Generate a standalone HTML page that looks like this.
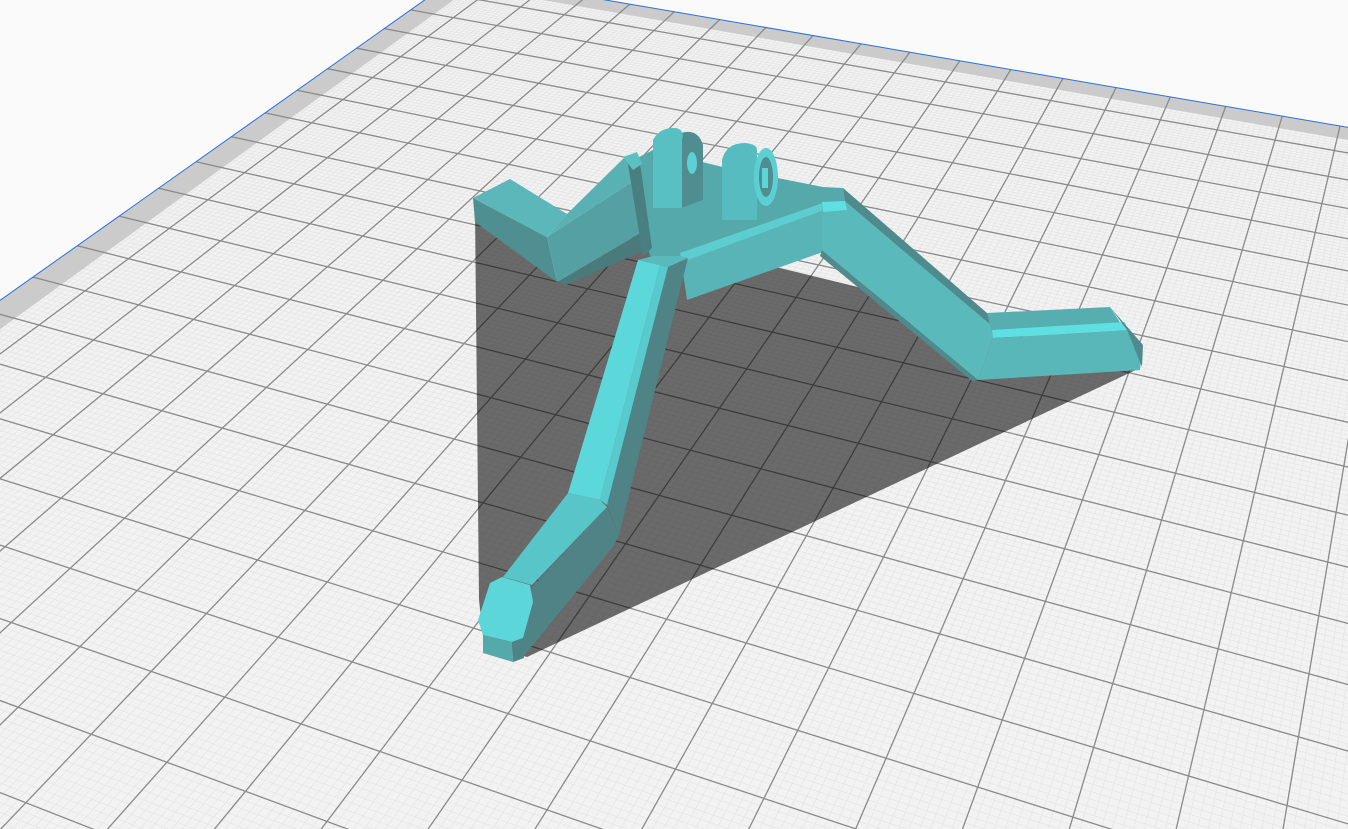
<!DOCTYPE html>
<html><head><meta charset="utf-8"><style>
html,body{margin:0;padding:0;background:#fafafa;overflow:hidden;width:1348px;height:829px}
svg{display:block}
</style></head><body>
<svg id="s" width="1348" height="829" viewBox="0 0 1348 829" xmlns="http://www.w3.org/2000/svg">
<rect width="1348" height="829" fill="#fafafa"/>
<g id="grid"></g>
<polygon fill="#000" fill-opacity="0.56" points="475,212 560,282 640,240 780,268 862,288 1000,330 1140,368 527,657 484,645 479,600"/>
<!-- left arm -->
<polygon fill="#4f8f92" points="473,198 547,237 557,282 475,222"/>
<polygon fill="#54a0a3" points="547,237 635,180 642,232 557,282"/>
<polygon fill="#4a7a7c" points="557,282 642,232 645,250 566,285"/>
<polygon fill="#5bb7ba" points="473,198 510,179 567,214 547,237"/>
<polygon fill="#59b1b4" points="547,237 567,214 626,156 635,180"/>
<!-- body -->
<polygon fill="#56a9ab" points="633,160 653,150 727,168 823,187 843,188 845,202 823,203 687,253 680,256 652,260 648,250"/>
<polygon fill="#4a7f81" points="627,158 640,163 652,248 643,257"/>
<polygon fill="#5cbfc1" points="623,157 637,152 642,164 633,170"/>
<!-- right arm upper -->
<polygon fill="#58b4b6" points="680,253 823,203 823,252 687,300"/>
<polygon fill="#5ecdd0" points="680,253 823,203 824,210 682,262"/>
<!-- elbow / descending -->
<polygon fill="#4f8a8c" points="843,188 987,313 993,327 845,202"/>
<polygon fill="#5ab9bb" points="822,202 845,201 993,327 993,338 978,380 822,250"/>
<polygon fill="#5ee0e3" points="822,202 845,201 847,210 823,212"/>
<polygon fill="#4f8a8c" points="822,250 978,380 972,381 820,256"/>
<!-- foot segment right -->
<polygon fill="#57aeb0" points="987,313 1110,307 1125,330 993,337"/>
<polygon fill="#5ee0e3" points="992,330 1125,322 1127,330 993,338"/>
<polygon fill="#5ab7b9" points="993,338 1127,330 1142,350 1140,370 978,380"/>
<polygon fill="#4f8a8c" points="1110,307 1143,345 1142,367 1127,330"/>
<!-- leg -->
<polygon fill="#4f8385" points="666,266 688,258 619,535 607,505"/>
<polygon fill="#5cd8db" points="638,260 660,265 600,500 568,493"/>
<polygon fill="#58c9cc" points="660,265 668,267 607,505 600,500"/>
<polygon fill="#5ab9bb" points="638,260 653,256 680,256 688,258 668,267 660,265"/>
<polygon fill="#58c5c8" points="568,493 600,500 607,507 532,585 503,577"/>
<polygon fill="#4f8385" points="607,507 619,535 613,547 523,657 522,638 532,587"/>
<polygon fill="#5cd6d9" points="490,583 502,577 530,585 533,602 523,638 512,642 483,635 478,620"/>
<polygon fill="#55a9ab" points="483,635 512,642 513,662 483,653"/>
<polygon fill="#4f8385" points="512,642 523,638 524,658 513,662"/>
<!-- left ear -->
<path fill="#4f8d90" d="M681,133 Q698,128 703,145 L703,200 L681,208 Z"/>
<path fill="#58c0c3" d="M653,208 L653,140 Q660,127 676,128 Q685,130 682,140 L682,208 Z"/>
<ellipse cx="692" cy="163" rx="5" ry="11" fill="#5ecfd2"/>
<!-- right ear -->
<path fill="#57bcbf" d="M722,220 L722,160 Q726,143 745,143 Q757,144 757,150 L757,220 Z"/>
<ellipse cx="766" cy="177" rx="12" ry="29" fill="#5ccfd2"/>
<ellipse cx="766" cy="177" rx="7" ry="20" fill="#4f8d90"/>
<rect x="762" y="168" width="6" height="20" fill="#5ed6d9"/>
</svg>
<script>
(function(){
var C1=[36.75,7.248,-0.00906],C2=[-33.56,17.26,-0.02157],C3=[460,-25,1];
function P(u,v){var w=C1[2]*u+C2[2]*v+C3[2];return [((C1[0]*u+C2[0]*v+C3[0])/w).toFixed(1),((C1[1]*u+C2[1]*v+C3[1])/w).toFixed(1)];}
var U1=26,V1=26;
var s='';
function poly(pts,f){s+='<polygon points="'+pts.map(function(p){return p.join(',')}).join(' ')+'" fill="'+f+'"/>';}
poly([P(0,0),P(U1,0),P(U1,V1),P(0,V1)],'#f2f2f2');
var fine='';
for(var i=1;i<=U1*10;i++){if(i%10==0)continue;var u=i/10;fine+='M'+P(u,0)+'L'+P(u,V1);}
for(var j=1;j<=V1*10;j++){if(j%10==0)continue;var v=j/10;fine+='M'+P(0,v)+'L'+P(U1,v);}
s+='<path d="'+fine+'" stroke="#e3e3e3" stroke-width="0.6" fill="none"/>';
poly([P(0,0),P(0.55,0),P(0.55,V1),P(0,V1)],'#cbcbcb');
poly([P(0,0),P(U1,0),P(U1,0.5),P(0,0.5)],'#cbcbcb');
var maj='';
for(var u2=1;u2<=U1;u2++){maj+='M'+P(u2,0)+'L'+P(u2,V1);}
for(var v2=1;v2<=V1;v2++){maj+='M'+P(0,v2)+'L'+P(U1,v2);}
s+='<path d="'+maj+'" stroke="#8a8a8a" stroke-width="1.3" fill="none"/>';
s+='<path d="M'+P(0,V1)+'L'+P(0,0)+'L'+P(U1,0)+'" stroke="#2a6fdb" stroke-width="1" fill="none"/>';
document.getElementById('grid').innerHTML=s;
})();
</script>
</body></html>
